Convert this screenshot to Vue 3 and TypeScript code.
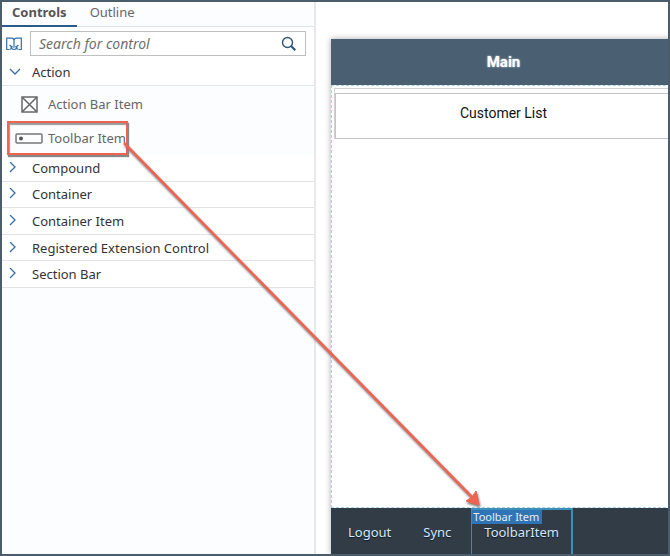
<script setup lang="ts">
import { ref } from 'vue'

type Tab = 'Controls' | 'Outline'

const tabs: Tab[] = ['Controls', 'Outline']
const activeTab = ref<Tab>('Controls')
const query = ref('')
const groups: string[] = ['Compound', 'Container', 'Container Item', 'Registered Extension Control', 'Section Bar']
const actions: string[] = ['Logout', 'Sync']
</script>

<template>
  <div class="frame">
    <aside class="sidebar">
      <nav class="tabs">
        <button
          v-for="tab in tabs"
          :key="tab"
          type="button"
          class="tab"
          :class="{ active: tab === activeTab }"
          @click="activeTab = tab"
        >{{ tab }}</button>
      </nav>

      <div class="search-row">
        <svg class="map-icon" viewBox="0 0 16 14" aria-hidden="true">
          <path d="M3 12.500H.7V1.200h4.600c1.600 0 2.700.8 2.700 2.200 0-1.400 1.100-2.200 2.700-2.200h4.600v11.300H13M8 3v4" />
          <path d="M8 7v2M3.500 8l2 1.500M12.500 8l-2 1.500M5 9.500c1 0 1.500.5 3 .5s2-.5 3-.5c0 1.500-1 3-3 3s-3-1.500-3-3zM3.500 12.500l2-1M12.500 12.500l-2-1" />
        </svg>
        <label class="search">
          <input v-model="query" type="text" placeholder="Search for control" aria-label="Search for control" />
          <svg class="search-icon" viewBox="0 0 16 16" aria-hidden="true">
            <circle cx="6.500" cy="6.500" r="5" />
            <path d="M10.300 10.300l4 4" class="handle" />
          </svg>
        </label>
      </div>

      <button type="button" class="group open">
        <svg class="chevron" viewBox="0 0 12 12" aria-hidden="true"><path d="M1 3l5 5 5-5" /></svg>
        <span>Action</span>
      </button>

      <ul class="items">
        <li class="item">
          <svg class="box-icon" viewBox="0 0 17 17" aria-hidden="true">
            <rect x="1" y="1" width="15" height="15" />
            <path d="M1.500 1.500l14 14M15.500 1.500l-14 14" />
          </svg>
          <span>Action Bar Item</span>
        </li>
        <li class="item marked">
          <svg class="bar-icon" viewBox="0 0 28 11" aria-hidden="true">
            <rect x="1" y="1" width="26" height="9" rx="1" />
            <circle cx="6" cy="5.500" r="2" />
          </svg>
          <span>Toolbar Item</span>
        </li>
      </ul>

      <div class="groups">
        <button v-for="group in groups" :key="group" type="button" class="group">
          <svg class="chevron" viewBox="0 0 12 12" aria-hidden="true"><path d="M1 0l5 5-5 5" /></svg>
          <span>{{ group }}</span>
        </button>
      </div>
    </aside>

    <main class="canvas">
      <section class="device">
        <header class="title-bar"><h1>Main</h1></header>
        <div class="page-area">
          <div class="card-outer">
            <div class="card">Customer List</div>
          </div>
        </div>
        <footer class="toolbar">
          <button v-for="action in actions" :key="action" type="button" class="tool">{{ action }}</button>
          <button type="button" class="tool selected">
            <span class="tag">Toolbar Item</span>ToolbarItem
          </button>
        </footer>
      </section>
    </main>

    <svg class="arrow" viewBox="0 0 670 556" aria-hidden="true">
      <path class="shaft" d="M124 143L473 498" />
      <path class="head" d="M479 505L476 491L472 497L466 501Z" />
    </svg>
  </div>
</template>

<style>
body {
  margin: 0;
}
</style>

<style scoped>
.frame {
  position: relative;
  display: grid;
  grid-template-columns: 314px 1fr;
  box-sizing: border-box;
  min-height: 100vh;
  border: 2px solid #4b5d6b;
  overflow: hidden;
  background: #fff;
  color: #333;
  font: 13px/20px "Noto Sans", sans-serif;
}

button {
  margin: 0;
  border: 0;
  background: none;
  color: inherit;
  font: inherit;
  cursor: pointer;
}

svg {
  flex: none;
  fill: none;
}

.sidebar {
  border-right: 2px solid #e6e8ee;
  background: #fcfdff;
}

.tabs {
  display: flex;
  gap: 3px;
  height: 24px;
  border-bottom: 1px solid #e1e3e7;
}

.tab {
  box-sizing: border-box;
  height: 25px;
  padding: 0 10px 5px;
  border-bottom: 2px solid transparent;
  color: #666;
}

.tab.active {
  border-bottom-color: #2a5b8c;
  color: #555;
  font-weight: 700;
}

.search-row {
  display: flex;
  align-items: center;
  gap: 8px;
  padding: 4px 8px 3px 4px;
  background: #fff;
}

.map-icon {
  width: 16px;
  height: 14px;
  stroke: #346fa5;
  stroke-width: 1.2;
}

.search {
  display: flex;
  flex: 1;
  align-items: center;
  box-sizing: border-box;
  height: 25px;
  padding: 0 8px;
  border: 1px solid #bfbfbf;
  background: #fff;
}

.search input {
  flex: 1;
  min-width: 0;
  padding: 0;
  border: 0;
  outline: 0;
  background: none;
  color: #333;
  font: 14px/20px "Noto Sans", sans-serif;
}

.search input::placeholder {
  color: #6f6f6f;
  font-style: italic;
  opacity: 1;
}

.search-icon {
  width: 16px;
  height: 16px;
  stroke: #30557a;
  stroke-width: 1.4;
}

.search-icon .handle {
  stroke-width: 2.2;
}

.group {
  display: flex;
  align-items: center;
  gap: 11px;
  box-sizing: border-box;
  width: 100%;
  padding: 0 7px;
  border-bottom: 1px solid #e1e3e7;
  background: #fff;
  text-align: left;
}

.group.open {
  height: 27px;
}

.chevron {
  width: 12px;
  height: 12px;
  stroke: #346fa5;
  stroke-width: 1.3;
}

.items {
  margin: 0;
  padding: 1px 0 0;
  list-style: none;
  color: #666;
}

.item {
  display: flex;
  align-items: center;
  gap: 10px;
  height: 34px;
  padding-left: 19px;
}

.box-icon {
  width: 17px;
  height: 17px;
  stroke: #666;
  stroke-width: 1.5;
}

.item.marked {
  position: relative;
  gap: 5px;
  box-sizing: border-box;
  width: 121px;
  margin-left: 5px;
  padding-left: 6px;
  border: 2px solid #ef6351;
  box-shadow: 1px 2px 1px #888, inset 1px 2px 1px #999;
  white-space: nowrap;
}

.bar-icon {
  width: 28px;
  height: 11px;
  stroke: #777;
  stroke-width: 1.5;
}

.bar-icon circle {
  fill: #555;
  stroke: none;
}

.groups {
  display: grid;
  grid-auto-rows: 1fr;
  min-height: 133px;
}

.canvas {
  display: flex;
  padding: 37px 0 0 15px;
}

.device {
  display: flex;
  flex: 1;
  flex-direction: column;
  margin-right: -8px;
  box-shadow: 0 0 6px #aaa;
}

.title-bar {
  display: flex;
  align-items: center;
  justify-content: center;
  height: 46px;
  background: #4a5f72;
  color: #fff;
}

.title-bar h1 {
  margin: 0;
  font: 700 15px/20px Roboto, sans-serif;
  text-shadow: 0 0 2px #dce6ef;
}

.page-area {
  flex: 1;
  padding: 2px;
  border: 1px dashed #a9d2e2;
  background: #fff;
}

.card-outer {
  padding-top: 4px;
  border: 1px solid #d2d2d2;
  border-bottom: 0;
}

.card {
  box-sizing: border-box;
  height: 46px;
  padding-top: 9px;
  border: 1px solid #c4c4c4;
  color: #111;
  font-family: Roboto, sans-serif;
  font-size: 14px;
  text-align: center;
}

.toolbar {
  display: flex;
  gap: 8px;
  height: 46px;
  padding-left: 5px;
  background: #323c47;
  color: #d5e7fa;
}

.tool {
  position: relative;
  padding: 2px 12px 0;
  text-shadow: 0 1px 1px #111820;
}

.tool.selected {
  padding: 0 12px;
  border: solid #3b8fb8;
  border-width: 2px 2px 0 1px;
}

.tag {
  position: absolute;
  top: 0;
  left: 0;
  padding: 0 3px 0 1px;
  background: #2f74b5;
  color: #e3effb;
  font-size: 11px;
  line-height: 14px;
  text-shadow: none;
  white-space: nowrap;
}

.arrow {
  position: absolute;
  top: -2px;
  left: -2px;
  width: 670px;
  height: 556px;
  filter: drop-shadow(1px 2px 1px #777);
  pointer-events: none;
}

.shaft {
  stroke: #ef6351;
  stroke-width: 2.5;
}

.head {
  fill: #ef6351;
  stroke: #ef6351;
}
</style>
